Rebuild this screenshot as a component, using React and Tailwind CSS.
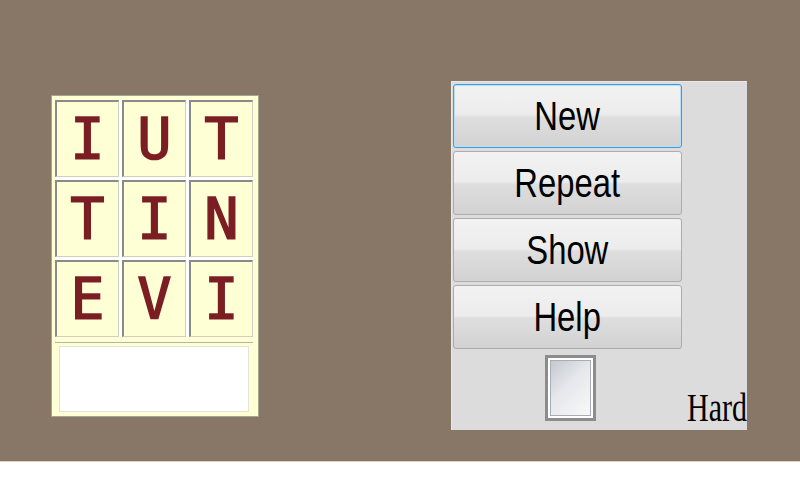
const letters = ['I', 'U', 'T', 'T', 'I', 'N', 'E', 'V', 'I'];
const buttons = ['New', 'Repeat', 'Show', 'Help'];

const btnBg =
  'bg-[linear-gradient(to_bottom,#f2f2f2_0%,#ececec_48%,#dedede_52%,#d2d2d2_100%)]';

export default function App() {
  return (
    <div className="w-[800px] h-[480px] bg-white overflow-hidden">
      <div className="h-[462px] bg-[#887766] flex items-start border-b border-[#d8d2c4]">
        {/* word grid */}
        <div className="ml-[51px] mt-[95px] w-[208px] h-[322px] shrink-0 border border-[#a6a690] bg-[#ffffd6] pt-[4px] pl-[3px] pr-[5px] flex flex-col">
          <div className="grid grid-cols-[64px_64px_64px] auto-rows-[77px] gap-x-[3px] gap-y-[3px] bg-white">
            {letters.map((l, i) => (
              <div
                key={i}
                className="bg-[#ffffd6] border-l-2 border-t-2 border-[#8a8a8a] border-r border-b border-r-[#d0d0c0] border-b-[#d0d0c0] flex items-center justify-center text-[#7b1e24] [-webkit-text-stroke:1.5px_#7b1e24] text-[57px] leading-none"
                style={{ fontFamily: '"DejaVu Sans Mono", monospace' }}
              >
                {l}
              </div>
            ))}
          </div>
          <div className="mt-[5px] border-t border-[#b4b4a0] pt-[3px] px-[4px]">
            <div className="h-[66px] bg-white border border-[#e4e4d4]"></div>
          </div>
        </div>

        {/* controls */}
        <div className="ml-[192px] mt-[81px] w-[296px] h-[349px] shrink-0 bg-[#dcdcdc] border-t border-l border-[#e8e8e8] pt-[2px] pl-[1px] flex overflow-hidden">
          <div className="w-[229px] shrink-0 flex flex-col gap-[3px]">
            {buttons.map((b, i) => (
              <div
                key={b}
                className={`h-[64px] rounded-[3px] border ${btnBg} flex items-center justify-center ${
                  i === 0
                    ? 'border-[#3c9fd9] shadow-[inset_0_0_0_1px_#b6def4]'
                    : 'border-[#acacac]'
                }`}
              >
                <span
                  className="inline-block scale-x-[0.8] text-[41px] leading-none text-black"
                  style={{ fontFamily: '"Liberation Sans", Arial, sans-serif' }}
                >
                  {b}
                </span>
              </div>
            ))}
            <div className="flex justify-center mt-[3px] pl-[6px]">
              <div className="w-[51px] h-[66px] border-[3px] border-[#8c8c8c] bg-white p-[2px]">
                <div className="w-full h-full border border-[#a8acb4] bg-[linear-gradient(135deg,#c4c8d0_0%,#e6e8ec_45%,#f8f8f8_100%)]"></div>
              </div>
            </div>
          </div>
          <div className="flex-1 flex items-end justify-end pb-[2px]">
            <span
              className="block w-[60px] whitespace-nowrap origin-left scale-x-[0.75] text-[40px] leading-none text-black"
              style={{ fontFamily: '"Liberation Serif", "Times New Roman", serif' }}
            >
              Hard
            </span>
          </div>
        </div>
      </div>
    </div>
  );
}
